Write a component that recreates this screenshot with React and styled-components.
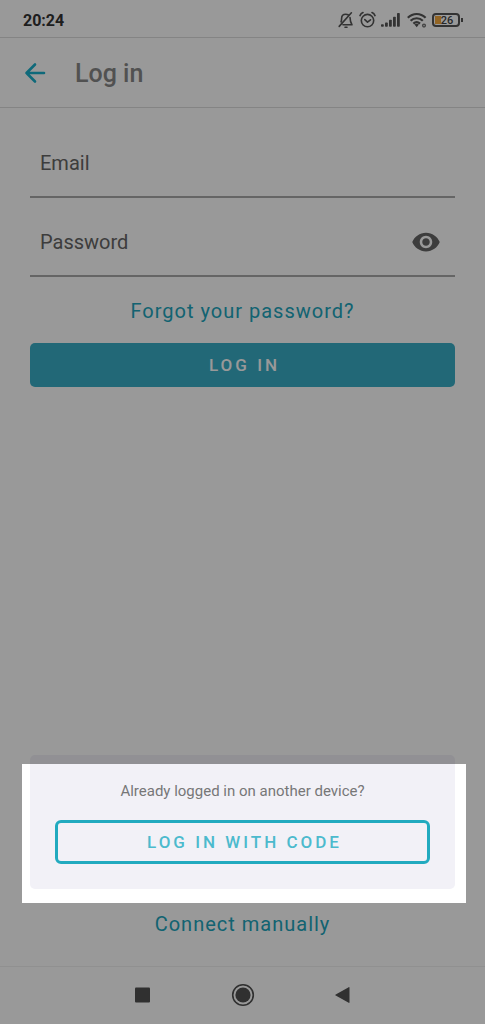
import React, { useState } from 'react';
import styled, { createGlobalStyle } from 'styled-components';
import { MdVisibility, MdVisibilityOff } from 'react-icons/md';

const GlobalStyle = createGlobalStyle`
  * {
    box-sizing: border-box;
  }

  body {
    margin: 0;
    background: #fff;
    font-family: Roboto, sans-serif;
  }

  button,
  input {
    font-family: inherit;
  }
`;

const Page = styled.div`
  position: relative;
  display: flex;
  flex-direction: column;
  min-height: 100vh;
  overflow: hidden;
  background: #fff;
`;

const StatusBar = styled.div`
  display: flex;
  align-items: center;
  justify-content: space-between;
  height: 38px;
  padding: 3px 22px 0 23px;
  border-bottom: 1px solid #dcdcdc;
  color: #333;
`;

const Time = styled.span`
  font-size: 16px;
  font-weight: 700;
`;

const StatusIcons = styled.div`
  display: flex;
  align-items: center;
  gap: 5px;
`;

const Battery = styled.div`
  display: flex;
  align-items: center;

  &::after {
    content: '';
    width: 2px;
    height: 4px;
    margin-left: 1px;
    background: #555;
  }
`;

const BatteryLevel = styled.span`
  width: 28px;
  height: 14px;
  border: 2px solid #555;
  border-radius: 4px;
  background: linear-gradient(#f5a83c, #f5a83c) 1px 1px / 6px 8px no-repeat;
  color: #444;
  font-size: 11px;
  font-weight: 500;
  line-height: 11px;
  text-align: center;
  padding-left: 2px;
`;

const Header = styled.header`
  display: flex;
  align-items: center;
  gap: 26px;
  height: 70px;
  padding: 2px 21px 0;
  border-bottom: 1px solid #dcdcdc;

  h1 {
    margin: 0;
    color: #888;
    font-size: 25px;
    font-weight: 500;
  }
`;

const IconButton = styled.button`
  display: flex;
  align-items: center;
  justify-content: center;
  padding: 0;
  border: none;
  background: none;
  color: ${props => props.color || '#666'};
  cursor: pointer;
`;

const Content = styled.main`
  display: flex;
  flex: 1;
  flex-direction: column;
  padding: 20px 30px 0;
`;

const Form = styled.form`
  display: flex;
  flex-direction: column;
`;

const Field = styled.div`
  display: flex;
  align-items: center;
  height: 70px;
  margin-bottom: 9px;
  padding: 2px 14px 0 10px;
  border-bottom: 2px solid #a8a8a8;

  input {
    flex: 1;
    min-width: 0;
    padding: 0;
    border: none;
    outline: none;
    background: none;
    color: #666;
    font-size: 20px;
  }
  input::placeholder {
    color: #666;
    opacity: 1;
  }
`;

const TextLink = styled.a`
  align-self: center;
  color: #20a5bd;
  font-size: 20px;
  line-height: 24px;
  letter-spacing: 1px;
  text-decoration: none;
`;

const FormLinks = styled.div`
  display: flex;
  justify-content: center;
  padding: 13px 0 20px;
`;

const Button = styled.button`
  height: 44px;
  padding: 0 0 0 4px;
  font-size: 17px;
  font-weight: 500;
  letter-spacing: 3px;
  cursor: pointer;
`;

const LoginButton = styled(Button)`
  border: none;
  border-radius: 5px;
  background: #39adc6;
  color: #fff;
`;

const CodeButton = styled(Button)`
  border: 3px solid #22aabf;
  border-radius: 6px;
  background: transparent;
  color: #4cbacd;
`;

const CodeCard = styled.section`
  position: relative;
  display: flex;
  flex-direction: column;
  margin-top: auto;
  padding: 26px 25px 25px;
  border-radius: 5px;
  background: #f2f1f7;

  p {
    margin: 0 0 19px;
    color: #777;
    font-size: 15px;
    line-height: 20px;
    text-align: center;
  }
`;

// everything outside of this box is dimmed by its shadow
const Spotlight = styled.div`
  position: absolute;
  top: 9px;
  right: -11px;
  bottom: -14px;
  left: -8px;
  box-shadow: 0 0 0 200vmax rgba(0, 0, 0, 0.4);
  pointer-events: none;
`;

const Footer = styled.footer`
  display: flex;
  justify-content: center;
  padding: 23px 0 30px;
`;

const NavBar = styled.nav`
  display: flex;
  justify-content: center;
  height: 58px;
  padding-bottom: 2px;
  border-top: 1px solid #f0f0f0;

  button {
    width: 100px;
  }
`;

const BackIcon = () => (
  <svg width="28" height="28" viewBox="0 0 28 28" fill="none" stroke="currentColor" strokeWidth="2.6" strokeLinecap="round" strokeLinejoin="round">
    <path d="M23 13H5.5M14 4.5L5.5 13L14 21.5" />
  </svg>
);

const BellOffIcon = () => (
  <svg width="16" height="18" viewBox="0 0 16 18" fill="none" stroke="#555" strokeWidth="1.6" strokeLinecap="round" strokeLinejoin="round">
    <path d="M3 10.8C3.6 9.8 3.6 8.8 3.6 7.4C3.6 4.8 5.4 3.2 7.8 3.2c.9 0 1.6.2 2.3.6M12 6.6c.1 3.6.3 4.4 2 7.2H5M7 16.2h2M13.4 1.8L1.2 15.4" />
  </svg>
);

const AlarmIcon = () => (
  <svg width="17" height="18" viewBox="0 0 17 18" fill="none" stroke="#555" strokeWidth="1.6" strokeLinecap="round" strokeLinejoin="round">
    <circle cx="8.5" cy="9.6" r="6.2" />
    <path d="M1 4.6C1.6 3.2 2.6 2.2 4 1.6M16 4.6C15.4 3.2 14.4 2.2 13 1.6M5.8 8.6l2.7 2.6 3-2.4" />
  </svg>
);

const SignalIcon = () => (
  <svg width="21" height="16" viewBox="0 0 21 16" fill="#555">
    <rect x="0" y="12.2" width="2.8" height="2.6" rx="0.8" />
    <rect x="4" y="10.4" width="2.8" height="4.4" rx="0.8" />
    <rect x="8" y="7.8" width="2.8" height="7" rx="0.8" />
    <rect x="12" y="4.8" width="2.8" height="10" rx="0.8" />
    <rect x="16" y="1" width="2.8" height="13.8" rx="0.8" />
  </svg>
);

const WifiIcon = () => (
  <svg width="20" height="16" viewBox="0 0 20 16" fill="none" stroke="#555" strokeWidth="2.2">
    <path d="M.8 5.8C6 .7 13.4 .7 18.6 5.8M3.6 8.8c3.4-3.4 8.8-3.4 12.2 0M6.4 11.6c2-1.9 4.6-1.9 6.6 0" />
    <path d="M7.5 12.6l2.2 2.6 2.2-2.6c-1.3-1.2-3.1-1.2-4.4 0z" fill="#555" stroke="none" />
    <circle cx="17" cy="13.6" r="1.4" stroke="#777" strokeWidth="1.4" />
  </svg>
);

const App = () => {
  const [showPassword, setShowPassword] = useState(false);

  return (
    <>
      <GlobalStyle />
      <Page>
        <StatusBar>
          <Time>20:24</Time>
          <StatusIcons>
            <BellOffIcon />
            <AlarmIcon />
            <SignalIcon />
            <WifiIcon />
            <Battery>
              <BatteryLevel>26</BatteryLevel>
            </Battery>
          </StatusIcons>
        </StatusBar>

        <Header>
          <IconButton aria-label="Back" color="#19b0cc">
            <BackIcon />
          </IconButton>
          <h1>Log in</h1>
        </Header>

        <Content>
          <Form onSubmit={(e) => e.preventDefault()}>
            <Field>
              <input type="email" aria-label="Email" placeholder="Email" />
            </Field>
            <Field>
              <input
                type={showPassword ? 'text' : 'password'}
                aria-label="Password"
                placeholder="Password"
              />
              <IconButton
                type="button"
                aria-label="Show password"
                onClick={() => setShowPassword(!showPassword)}
              >
                {showPassword ? <MdVisibilityOff size={30} /> : <MdVisibility size={30} />}
              </IconButton>
            </Field>
            <FormLinks>
              <TextLink href="#forgot">Forgot your password?</TextLink>
            </FormLinks>
            <LoginButton type="submit">LOG IN</LoginButton>
          </Form>

          <CodeCard>
            <p>Already logged in on another device?</p>
            <CodeButton type="button">LOG IN WITH CODE</CodeButton>
            <Spotlight />
          </CodeCard>

          <Footer>
            <TextLink href="#connect">Connect manually</TextLink>
          </Footer>
        </Content>

        <NavBar>
          <IconButton aria-label="Recent apps" color="#505050">
            <svg width="16" height="16" viewBox="0 0 16 16" fill="currentColor">
              <rect x="0" y="0.5" width="15" height="15" rx="1" />
            </svg>
          </IconButton>
          <IconButton aria-label="Home" color="#505050">
            <svg width="24" height="24" viewBox="0 0 24 24">
              <circle cx="12" cy="12" r="10.3" fill="none" stroke="currentColor" strokeWidth="1.6" />
              <circle cx="12" cy="12" r="7.6" fill="currentColor" />
            </svg>
          </IconButton>
          <IconButton aria-label="Go back" color="#505050">
            <svg width="16" height="18" viewBox="0 0 16 18" fill="currentColor">
              <path d="M13.7 1.2L.7 8.4c-.5.3-.5.9 0 1.2l13 7.2c.4.2.8 0 .8-.5V1.7c0-.5-.4-.7-.8-.5z" />
            </svg>
          </IconButton>
        </NavBar>
      </Page>
    </>
  );
};

export default App;
